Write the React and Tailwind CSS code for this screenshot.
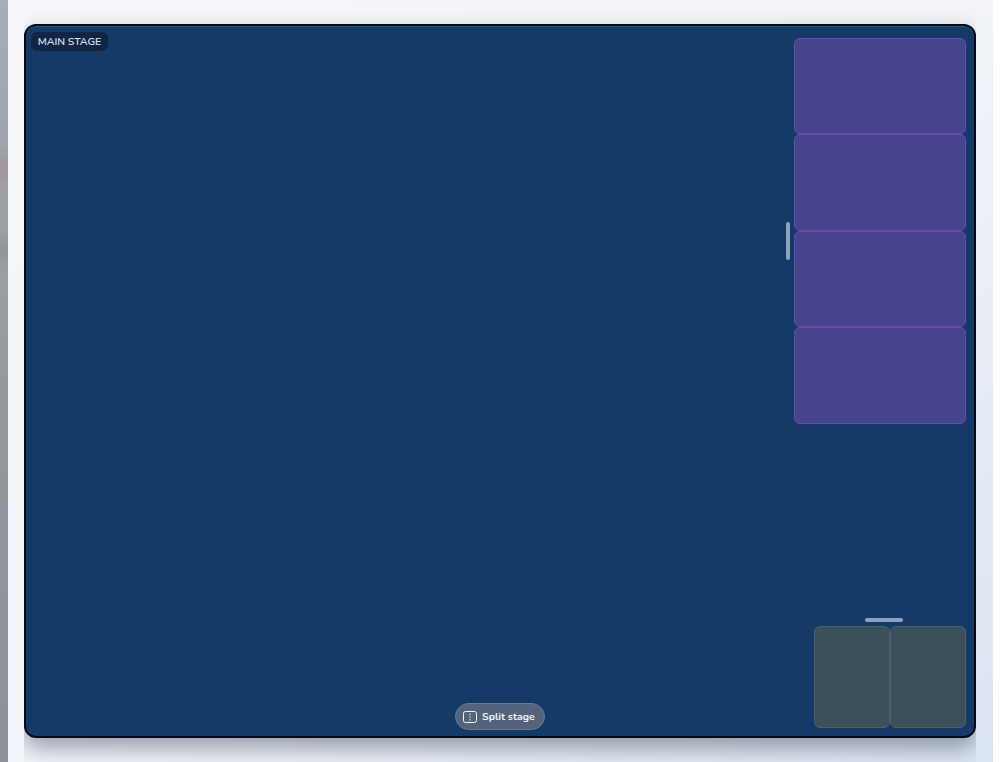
export default function App() {
  return (
    <div className="w-[1000px] h-[762px] flex overflow-hidden bg-white font-['Nunito','Lato','Noto_Sans',sans-serif]">
      <div className="relative w-2 h-full shrink-0 overflow-hidden bg-gradient-to-b from-[#a6adb5] via-[#95989f] to-[#8d9199]">
        <div className="absolute -left-1 top-[155px] w-3 h-7 rounded-full bg-[#a58a92] blur-sm" />
        <div className="absolute -left-1 top-[240px] w-3 h-5 rounded-full bg-[#85888f] blur-sm" />
      </div>
      <div className="w-[985px] h-full shrink-0 bg-gradient-to-br from-[#f6f7fa] via-[#f2f4f9] to-[#dbe4f2] pl-4 pr-[17px]">
        <div className="w-[952px] h-full overflow-hidden pt-6">
          <div className="relative h-[714px] rounded-xl border-2 border-[#050a12] bg-[#143b68] shadow-[inset_0_1px_0_#1d5a9c,0_10px_22px_rgba(30,40,60,0.42)]">
            <div className="absolute left-[5px] top-[6px] h-[19px] w-[77px] pt-px rounded-md bg-[#0f2744] flex items-center justify-center text-[10.5px] font-semibold leading-none text-[#dbe2ec]">MAIN STAGE</div>
            <div className="absolute left-[760px] top-[196px] w-1 h-[38px] rounded-sm bg-[#8ea3ba]" />
            <div className="absolute left-[768px] top-3 w-[172px] flex flex-col">
              <div className="h-[96px] rounded-md border border-[#6a49b0] bg-[#47448e]" />
              <div className="h-[97px] rounded-md border border-[#6a49b0] bg-[#47448e]" />
              <div className="h-[96px] rounded-md border border-[#6a49b0] bg-[#47448e]" />
              <div className="h-[97px] rounded-md border border-[#6a49b0] bg-[#47448e]" />
            </div>
            <div className="absolute left-[839px] top-[592px] w-[38px] h-1 rounded-sm bg-[#8ea3ba]" />
            <div className="absolute left-[788px] top-[600px] flex">
              <div className="w-[76px] h-[102px] rounded-md border border-[#505f60] bg-[#3c4f5c]" />
              <div className="w-[76px] h-[102px] rounded-md border border-[#505f60] bg-[#3c4f5c]" />
            </div>
            <div className="absolute left-[429px] top-[677px] w-[90px] h-[27px] rounded-full border border-[#6b7a8e] bg-[#53637b] flex items-center pl-[7px] gap-[5px] text-[10.5px] font-bold text-[#f1f4f8]">
              <svg width="14" height="12" viewBox="0 0 14 12" fill="none" stroke="currentColor">
                <rect x="0.5" y="0.5" width="13" height="11" rx="2" />
                <path d="M7 2.5v1.5M7 5.2v1.5M7 8v1.5" />
              </svg>
              <span>Split stage</span>
            </div>
          </div>
        </div>
      </div>
    </div>
  );
}
